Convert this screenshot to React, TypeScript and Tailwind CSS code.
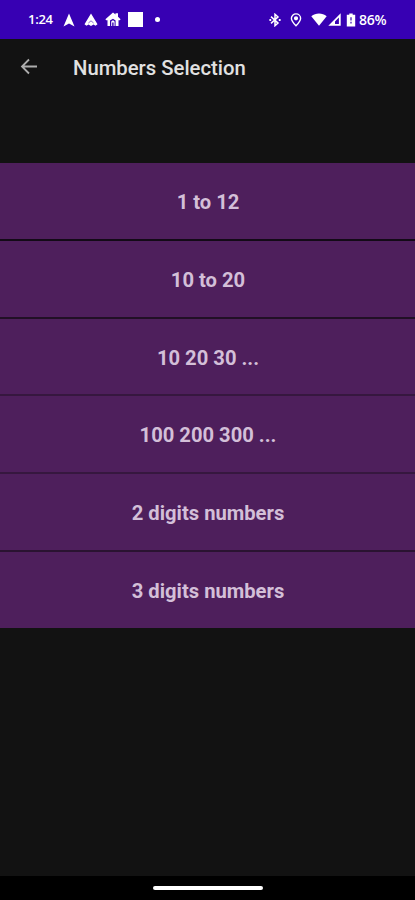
import clsx from "clsx";

type Option = {
  label: string;
  size: string;
};

const OPTIONS: Option[] = [
  { label: "1 to 12", size: "h-[78px] border-b-2 border-[#130a17]" },
  { label: "10 to 20", size: "h-[78px] border-b-2 border-[#211026]" },
  { label: "10 20 30 ...", size: "h-[77px] border-b-2 border-[#36173f]" },
  { label: "100 200 300 ...", size: "h-[78px] border-b-2 border-[#36173f]" },
  { label: "2 digits numbers", size: "h-[78px] border-b-2 border-[#2a1331]" },
  { label: "3 digits numbers", size: "h-[76px]" },
];

function NotificationIcons() {
  return (
    <div className="flex items-center">
      <svg className="ml-[9px] h-[14px] w-[12px]" viewBox="0 0 12 14" fill="currentColor">
        <path d="M6 0.5 11.5 13.4 6 10.6 0.5 13.4Z" />
      </svg>
      <svg className="ml-[9px] h-[14px] w-[14px]" viewBox="0 0 14 14" fill="currentColor">
        <path d="M7 0.5 13.5 11.2 11.5 12.8 9.5 11.4 7 13 4.5 11.4 2.5 12.8 0.5 11.2Z" />
        <path d="M4.4 10 7 7.8 9.6 10" fill="none" stroke="#3700b3" strokeWidth="0.6" />
      </svg>
      <svg className="ml-[7px] h-[15px] w-[16px]" viewBox="0 0 16 15" fill="currentColor">
        <path d="M8 0.5 10.5 2.6V1.2H13V4.8L15.6 7.2 14.8 8.2H13.5V14H10.6V8.5L8 6.8 5 8.5V14H2.5V8.2H1.2L0.4 7.2Z" />
        <path d="M6.2 9.4 8 8.2 9.6 9.4V14H8.6V10.4H7.2V14H6.2Z" />
      </svg>
      <div className="ml-[7px] size-[15px] bg-white" />
      <div className="ml-[12px] size-[5px] rounded-full bg-white" />
    </div>
  );
}

function SystemIcons() {
  return (
    <div className="flex items-center">
      <svg className="h-[14px] w-[12px]" viewBox="0 0 12 14" fill="none" stroke="currentColor" strokeWidth="1.5">
        <path d="M2 3.6 9 10.1 6 12.7V1.3L9 3.9 2 10.4" />
        <path d="M0.4 7H2.2M9.8 7H11.6" strokeWidth="1.8" />
      </svg>
      <svg className="ml-[9px] h-[14px] w-[12px]" viewBox="0 0 12 14" fill="none" stroke="currentColor" strokeWidth="1.4">
        <path d="M6 12.8C3.6 10.4 1.4 8 1.4 5.3A4.6 4.4 0 0 1 10.6 5.3C10.6 8 8.4 10.4 6 12.8Z" />
        <circle cx="6" cy="5.3" r="1.4" fill="currentColor" />
      </svg>
      <svg className="ml-[9px] h-[13px] w-[16px]" viewBox="0 0 16 13" fill="currentColor">
        <path d="M0.3 3.2C4.7-0.3 11.3-0.3 15.7 3.2L8 12.8Z" />
      </svg>
      <svg className="ml-px h-[13px] w-[13px]" viewBox="0 0 13 13" fill="currentColor">
        <path fillRule="evenodd" d="M12.7 0.3V12.7H0.3ZM10.9 4.6 7 8.5V11H10.9Z" />
      </svg>
      <svg className="ml-[5px] h-[14px] w-[10px]" viewBox="0 0 10 14" fill="currentColor">
        <path fillRule="evenodd" d="M3.3 0.4H6.7V1.7H9.2V13.6H0.8V1.7H3.3ZM4.4 4.2V7.4H5.6V4.2ZM4.4 8.8V10.4H5.6V8.8Z" />
      </svg>
    </div>
  );
}

function StatusBar() {
  return (
    <div className="flex h-[39px] items-center bg-[#3700b3] pl-[28px] text-white">
      <span className="w-[26px] font-['Open_Sans'] text-[13px] font-semibold tracking-[-0.3px] whitespace-nowrap">
        1:24
      </span>
      <NotificationIcons />
      <div className="ml-auto flex w-[146px] items-center">
        <SystemIcons />
        <span className="ml-[3px] font-['Open_Sans'] text-[14px] font-semibold tracking-[-0.3px]">86%</span>
      </div>
    </div>
  );
}

export default function App() {
  return (
    <div className="flex h-[900px] w-[415px] flex-col overflow-hidden bg-[#121212] font-[Roboto,sans-serif]">
      <StatusBar />

      <header className="flex h-[56px] items-center pl-[20px]">
        <button type="button" aria-label="Back" className="text-[#adadad]">
          <svg className="h-[18px] w-[18px]" viewBox="0 0 18 18" fill="none" stroke="currentColor" strokeWidth="1.8">
            <path d="M17 8.5H2M9 1.5 2 8.5l7 7" />
          </svg>
        </button>
        <h1 className="ml-[35px] pt-[2px] text-[20.3px] font-medium whitespace-nowrap text-[#e1e1e1]">
          Numbers Selection
        </h1>
      </header>

      <main className="mt-[68px] flex flex-col">
        {OPTIONS.map((option) => (
          <button
            key={option.label}
            type="button"
            className={clsx(
              "flex w-full items-center justify-center bg-[#4e1f5c] pt-[3px] pl-px text-[20.2px] font-bold text-[#d3bfd8]",
              option.size,
            )}
          >
            {option.label}
          </button>
        ))}
      </main>

      {/* Gesture bar */}
      <div className="mt-auto flex h-[24px] items-center justify-center bg-black">
        <div className="h-[4px] w-[110px] rounded-full bg-white" />
      </div>
    </div>
  );
}
